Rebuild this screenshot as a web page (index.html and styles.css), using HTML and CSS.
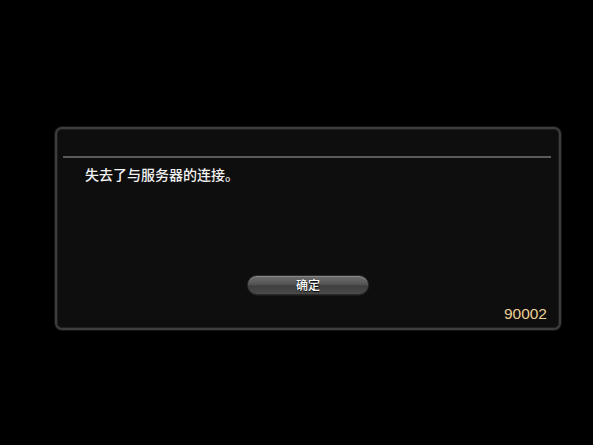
FILE: index.html
```html
<!DOCTYPE html>
<html lang="zh-CN">
<head>
<meta charset="utf-8">
<title>连接中断</title>
<link rel="stylesheet" href="styles.css">
</head>
<body>
<div class="dialog">
  <div class="divider"></div>
  <p class="message">失去了与服务器的连接。</p>
  <div class="actions"><button class="btn">确定</button></div>
  <div class="code">90002</div>
</div>
</body>
</html>
```
FILE: styles.css
```css
html, body {
  margin: 0;
  padding: 0;
  background: #000;
  width: 593px;
  height: 445px;
  overflow: hidden;
}
body {
  font-family: "Noto Sans CJK SC", "Noto Sans", sans-serif;
  color: #fff;
}
.dialog {
  box-sizing: border-box;
  width: 506px;
  height: 203px;
  margin: 127px 0 0 55px;
  border: 2px solid #3d3d3d;
  border-radius: 7px;
  background: #0e0e0e;
  box-shadow: inset 0 0 0 1px #1e1e1e, 0 0 0 1px #141414;
  padding: 27px 8px 0 6px;
  display: flex;
  flex-direction: column;
}
.divider {
  height: 2px;
  background: #5a5a5a;
}
.message {
  margin: 7px 0 0 22px;
  font-size: 14px;
  line-height: 18px;
  font-weight: 500;
  color: #f2f2f2;
}
.actions {
  display: flex;
  justify-content: center;
  margin-top: 92px;
}
.btn {
  box-sizing: border-box;
  width: 122px;
  height: 20px;
  margin-left: 2px;
  border-radius: 10px;
  border: 1px solid #2a2a2a;
  background: linear-gradient(#6e6e6e 0%, #555 45%, #3f3f3f 55%, #4a4a4a 100%);
  box-shadow: inset 0 1px 0 #888, 0 1px 0 #1a1a1a;
  color: #fff;
  font-family: "Noto Sans CJK SC", sans-serif;
  font-size: 12px;
  font-weight: 500;
  line-height: 18px;
  padding: 0;
  text-shadow: 0 1px 1px #000;
}
.code {
  margin-top: 10px;
  align-self: flex-end;
  padding-right: 4px;
  font-family: "Liberation Sans", sans-serif;
  font-size: 15.5px;
  line-height: 18px;
  color: #ecd095;
}
```
